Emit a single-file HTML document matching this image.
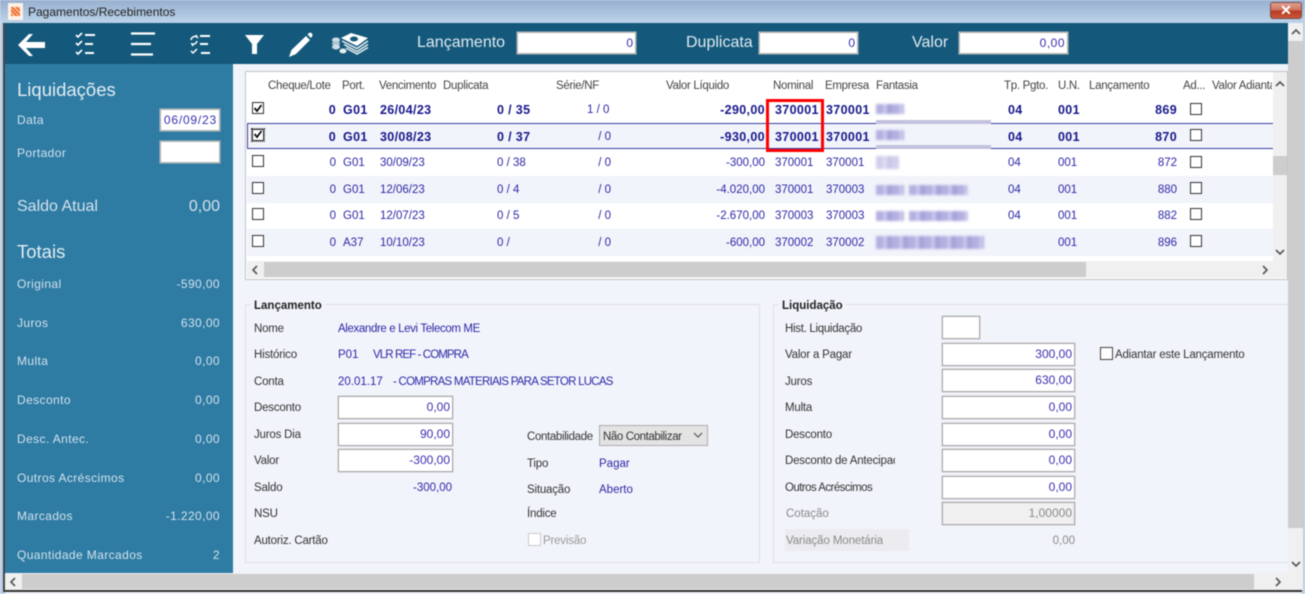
<!DOCTYPE html>
<html lang="pt"><head><meta charset="utf-8"><title>Pagamentos/Recebimentos</title>
<style>
html,body{margin:0;padding:0;width:1305px;height:594px;overflow:hidden;background:#f2f4fb}
#w{position:absolute;left:0;top:0;width:1305px;height:594px;overflow:hidden;filter:blur(.4px);font-family:"Liberation Sans",sans-serif;font-size:11.5px;color:#333}
#w div,#w svg{position:absolute}
.t{white-space:nowrap;line-height:14px;height:14px}
.h{color:#444;top:79px;letter-spacing:-.3px}
.b{color:#2d27a6;margin-top:1px}
.n{color:#17178c;font-weight:bold;margin-top:1px;font-size:12.5px;letter-spacing:.35px}
.s{color:#d3e3ee;font-size:12px;letter-spacing:.4px}
.sv{color:#d3e3ee;font-size:12px;letter-spacing:.4px;text-align:right;width:90px;left:130px}
.i{background:#fff;border:1px solid #aaa;box-shadow:0 0 0 .5px #ccc;box-sizing:border-box;color:#3a2fb0;text-align:right;padding-right:2px;line-height:21px;font-size:12px;height:22px}
.c{width:12px;height:12px;border:1px solid #333;background:#fff;box-sizing:border-box}
.m{filter:blur(1.2px);height:10px;background:repeating-linear-gradient(90deg,#b3b0e0 0 7px,#c8c6ea 7px 11px,#a6a3da 11px 16px)}
.sb{background:#cdcdcd}
.l{color:#333;margin-top:1px;letter-spacing:-.2px}
.g{color:#8a8a8a;margin-top:1px}
</style></head><body><div id="w">

<div style="left:0;top:0;width:1305px;height:23px;background:linear-gradient(#97b0ce,#bcd3ea)"></div>
<div style="left:0;top:23px;width:5px;height:571px;background:#b9cfe6"></div>
<div style="left:3px;top:23px;width:2px;height:568px;background:#444"></div>
<div style="left:3px;top:590px;width:1299px;height:2px;background:#333"></div>
<div style="left:1302px;top:23px;width:3px;height:571px;background:#b9cfe6"></div>
<div style="left:8px;top:3px;width:15px;height:17px;background:#fdf1e8"></div>
<div style="left:11px;top:7px;width:9px;height:9px;background:repeating-linear-gradient(45deg,#f0702a 0 2px,#fde0c8 2px 3px)"></div>
<div class="t" style="left:28px;top:5px;color:#222;font-size:12px">Pagamentos/Recebimentos</div>
<div style="left:1270px;top:2px;width:32px;height:17px;border:1px solid #7d4a4a;box-sizing:border-box;border-radius:3px;background:linear-gradient(#e0a090 0,#d07560 45%,#b83a20 55%,#c9583c)"></div>
<div class="t" style="left:1270px;top:3px;width:32px;text-align:center;color:#fff;font-weight:bold;font-size:14px">✕</div>

<!-- toolbar -->
<div style="left:5px;top:23px;width:1283px;height:41px;background:#14597b"></div>
<svg style="left:17px;top:32px" width="30" height="26" viewBox="0 0 30 26"><path d="M1 13 L12 2 L16 2 L9 10 L28 10 L28 16 L9 16 L16 24 L12 24 Z" fill="#fff"/></svg>
<svg style="left:72px;top:31px" width="26" height="26" viewBox="0 0 26 26" stroke="#fff" fill="none" stroke-width="1.6"><path d="M4 4l2 2 4-4M4 12l2 2 4-4M4 21l2 2 4-4"/><path stroke-width="2" d="M13 4h10M13 13h8M13 22h9"/></svg>
<svg style="left:128px;top:31px" width="28" height="26" viewBox="0 0 28 26" stroke="#fff" stroke-width="2.2" fill="none"><path d="M3 2.5h24M3 13h20M3 23.5h22"/></svg>
<svg style="left:188px;top:33px" width="26" height="24" viewBox="0 0 26 24" stroke="#fff" fill="none" stroke-width="1.5"><path d="M3 7a4 4 0 0 1 6-3l-1-2M9 8a4 4 0 0 1-5 3l1 2M3 18l2 2 4-4"/><path stroke-width="2" d="M12 3h10M12 11h8M13 20h9"/></svg>
<svg style="left:244px;top:34px" width="21" height="21" viewBox="0 0 21 21"><path d="M1 1H20L13 10V20H8V10Z" fill="#fff"/></svg>
<svg style="left:288px;top:31px" width="26" height="27" viewBox="0 0 26 27" fill="#fff"><path d="M1 26L3.500 19L18 5L22 9L8 23Z"/><path d="M19.500 3.500L21 2Q22.500 1 24 2.500Q25 4 24 5.500L23 7Z"/></svg>
<svg style="left:331px;top:32px" width="38" height="24" viewBox="0 0 38 24"><path d="M10 6L20 1 37 6 26 14Z" fill="#fff"/><ellipse cx="23" cy="7" rx="4" ry="2.500" fill="#14597b"/><path d="M11 9L26 16.500 37 9M13 12.500L26 19.500 37 12.500M15 16L26 22 37 15.500" fill="none" stroke="#eaf0f4" stroke-width="1.500"/><ellipse cx="5" cy="8" rx="4" ry="2.500" fill="#cfdde6"/><ellipse cx="5" cy="11.500" rx="4" ry="2.500" fill="#aec3d0"/><ellipse cx="5" cy="15" rx="4" ry="2.500" fill="#cfdde6"/><ellipse cx="12" cy="19" rx="3.500" ry="2.500" fill="#e5edf2"/></svg>
<div class="t" style="left:417px;top:34px;color:#dfe9f0;font-size:16px;line-height:18px;height:18px">Lançamento</div>
<div class="i" style="left:517px;top:32px;width:119px">0</div>
<div class="t" style="left:686px;top:34px;color:#dfe9f0;font-size:16px;line-height:18px;height:18px">Duplicata</div>
<div class="i" style="left:759px;top:32px;width:99px">0</div>
<div class="t" style="left:912px;top:34px;color:#dfe9f0;font-size:16px;line-height:18px;height:18px">Valor</div>
<div class="i" style="left:959px;top:32px;width:109px;letter-spacing:.5px">0,00</div>

<!-- outer v scrollbar -->
<div style="left:1288px;top:23px;width:15px;height:567px;background:#f0f0f0"></div>
<div class="sb" style="left:1288px;top:41px;width:15px;height:487px"></div>
<svg style="left:1291px;top:28px" width="10" height="8" viewBox="0 0 10 8" fill="none" stroke="#555" stroke-width="1.6"><path d="M1 6l4-4 4 4"/></svg>
<svg style="left:1291px;top:560px" width="10" height="8" viewBox="0 0 10 8" fill="none" stroke="#555" stroke-width="1.6"><path d="M1 2l4 4 4-4"/></svg>

<!-- sidebar -->
<div style="left:5px;top:64px;width:228px;height:509px;background:#2e7ba3"></div>
<div class="t" style="left:17px;top:79px;color:#e3edf3;font-size:18.500px;line-height:21px;height:21px">Liquidações</div>
<div class="t s" style="left:17px;top:113px">Data</div>
<div class="i" style="left:160px;top:109px;width:60px;padding-right:2px;letter-spacing:.8px">06/09/23</div>
<div class="t s" style="left:17px;top:146px">Portador</div>
<div class="i" style="left:160px;top:141px;width:60px"></div>
<div class="t" style="left:17px;top:197px;color:#d3e3ee;font-size:16px;line-height:19px;height:19px">Saldo Atual</div>
<div class="t" style="left:130px;width:90px;text-align:right;top:197px;color:#d3e3ee;font-size:16px;line-height:19px;height:19px">0,00</div>
<div class="t" style="left:17px;top:241px;color:#e3edf3;font-size:18.500px;line-height:21px;height:21px">Totais</div>
<div class="t s" style="left:17px;top:277px">Original</div><div class="t sv" style="top:277px">-590,00</div>
<div class="t s" style="left:17px;top:316px">Juros</div><div class="t sv" style="top:316px">630,00</div>
<div class="t s" style="left:17px;top:354px">Multa</div><div class="t sv" style="top:354px">0,00</div>
<div class="t s" style="left:17px;top:393px">Desconto</div><div class="t sv" style="top:393px">0,00</div>
<div class="t s" style="left:17px;top:432px">Desc. Antec.</div><div class="t sv" style="top:432px">0,00</div>
<div class="t s" style="left:17px;top:471px">Outros Acréscimos</div><div class="t sv" style="top:471px">0,00</div>
<div class="t s" style="left:17px;top:509px">Marcados</div><div class="t sv" style="top:509px">-1.220,00</div>
<div class="t s" style="left:17px;top:548px">Quantidade Marcados</div><div class="t sv" style="top:548px">2</div>

<!-- grid -->
<div style="left:245px;top:71px;width:1043px;height:209px;background:#fff;border:1px solid #c4c4c4;box-sizing:border-box"></div>
<div style="left:247px;top:176px;width:1026px;height:27px;background:#f2f4fb"></div>
<div style="left:247px;top:229px;width:1026px;height:27px;background:#f2f4fb"></div>
<div style="left:247px;top:123px;width:1026px;height:26px;background:#f2f4fb;border:1px solid #3c3ca0;border-right:0;box-sizing:border-box"></div>

<div class="t h" style="left:268px">Cheque/Lote</div>
<div class="t h" style="left:342px">Port.</div>
<div class="t h" style="left:379px">Vencimento</div>
<div class="t h" style="left:443px">Duplicata</div>
<div class="t h" style="left:556px">Série/NF</div>
<div class="t h" style="left:666px">Valor Líquido</div>
<div class="t h" style="left:773px">Nominal</div>
<div class="t h" style="left:825px">Empresa</div>
<div class="t h" style="left:876px">Fantasia</div>
<div class="t h" style="left:1004px">Tp. Pgto.</div>
<div class="t h" style="left:1058px">U.N.</div>
<div class="t h" style="left:1089px">Lançamento</div>
<div class="t h" style="left:1183px">Ad...</div>
<div class="t h" style="left:1212px;width:60px;overflow:hidden">Valor Adiantado</div>

<!-- row 1 -->
<div class="c" style="left:252px;top:102px"></div><svg style="left:253px;top:103px" width="10" height="10" viewBox="0 0 10 10" fill="none" stroke="#111" stroke-width="1.8"><path d="M1.500 5l2.500 3 4.500-6"/></svg>
<div class="t n" style="left:286px;width:50px;text-align:right;top:102px">0</div>
<div class="t n" style="left:343px;top:102px">G01</div>
<div class="t n" style="left:380px;top:102px">26/04/23</div>
<div class="t n" style="left:497px;top:102px">0 / 35</div>
<div class="t b" style="left:587px;top:102px">1 / 0</div>
<div class="t n" style="left:680px;width:85px;text-align:right;top:102px">-290,00</div>
<div class="t n" style="left:775px;top:102px">370001</div>
<div class="t n" style="left:826px;top:102px">370001</div>
<div class="m" style="left:876px;top:104px;width:28px"></div>
<div style="left:876px;top:120px;width:115px;height:4px;background:#c3c1e0"></div>
<div class="t n" style="left:1008px;top:102px">04</div>
<div class="t n" style="left:1058px;top:102px">001</div>
<div class="t n" style="left:1127px;width:50px;text-align:right;top:102px">869</div>
<div class="c" style="left:1190px;top:103px"></div>

<!-- row 2 -->
<div class="c" style="left:252px;top:129px;outline:1px dotted #333"></div><svg style="left:253px;top:129px" width="10" height="10" viewBox="0 0 10 10" fill="none" stroke="#111" stroke-width="1.8"><path d="M1.500 5l2.500 3 4.500-6"/></svg>
<div class="t n" style="left:286px;width:50px;text-align:right;top:129px">0</div>
<div class="t n" style="left:343px;top:129px">G01</div>
<div class="t n" style="left:380px;top:129px">30/08/23</div>
<div class="t n" style="left:497px;top:129px">0 / 37</div>
<div class="t b" style="left:590px;width:21px;text-align:right;top:129px">/ 0</div>
<div class="t n" style="left:680px;width:85px;text-align:right;top:129px">-930,00</div>
<div class="t n" style="left:775px;top:129px">370001</div>
<div class="t n" style="left:826px;top:129px">370001</div>
<div class="m" style="left:876px;top:130px;width:28px"></div>
<div style="left:876px;top:145px;width:115px;height:4px;background:#c3c1e0"></div>
<div class="t n" style="left:1008px;top:129px">04</div>
<div class="t n" style="left:1058px;top:129px">001</div>
<div class="t n" style="left:1127px;width:50px;text-align:right;top:129px">870</div>
<div class="c" style="left:1190px;top:129px"></div>

<!-- row 3 -->
<div class="c" style="left:252px;top:155px"></div>
<div class="t b" style="left:286px;width:50px;text-align:right;top:155px">0</div>
<div class="t b" style="left:343px;top:155px">G01</div>
<div class="t b" style="left:380px;top:155px">30/09/23</div>
<div class="t b" style="left:497px;top:155px">0 / 38</div>
<div class="t b" style="left:590px;width:21px;text-align:right;top:155px">/ 0</div>
<div class="t b" style="left:680px;width:85px;text-align:right;top:155px">-300,00</div>
<div class="t b" style="left:775px;top:155px">370001</div>
<div class="t b" style="left:826px;top:155px">370001</div>
<div class="m" style="left:876px;top:156px;width:23px;height:13px;opacity:.6"></div>
<div class="t b" style="left:1008px;top:155px">04</div>
<div class="t b" style="left:1058px;top:155px">001</div>
<div class="t b" style="left:1127px;width:50px;text-align:right;top:155px">872</div>
<div class="c" style="left:1190px;top:156px"></div>

<!-- row 4 -->
<div class="c" style="left:252px;top:182px"></div>
<div class="t b" style="left:286px;width:50px;text-align:right;top:182px">0</div>
<div class="t b" style="left:343px;top:182px">G01</div>
<div class="t b" style="left:380px;top:182px">12/06/23</div>
<div class="t b" style="left:497px;top:182px">0 / 4</div>
<div class="t b" style="left:590px;width:21px;text-align:right;top:182px">/ 0</div>
<div class="t b" style="left:680px;width:85px;text-align:right;top:182px">-4.020,00</div>
<div class="t b" style="left:775px;top:182px">370001</div>
<div class="t b" style="left:826px;top:182px">370003</div>
<div class="m" style="left:876px;top:185px;width:28px"></div><div class="m" style="left:909px;top:185px;width:59px"></div>
<div class="t b" style="left:1008px;top:182px">04</div>
<div class="t b" style="left:1058px;top:182px">001</div>
<div class="t b" style="left:1127px;width:50px;text-align:right;top:182px">880</div>
<div class="c" style="left:1190px;top:182px"></div>

<!-- row 5 -->
<div class="c" style="left:252px;top:208px"></div>
<div class="t b" style="left:286px;width:50px;text-align:right;top:208px">0</div>
<div class="t b" style="left:343px;top:208px">G01</div>
<div class="t b" style="left:380px;top:208px">12/07/23</div>
<div class="t b" style="left:497px;top:208px">0 / 5</div>
<div class="t b" style="left:590px;width:21px;text-align:right;top:208px">/ 0</div>
<div class="t b" style="left:680px;width:85px;text-align:right;top:208px">-2.670,00</div>
<div class="t b" style="left:775px;top:208px">370003</div>
<div class="t b" style="left:826px;top:208px">370003</div>
<div class="m" style="left:876px;top:211px;width:28px"></div><div class="m" style="left:909px;top:211px;width:59px"></div>
<div class="t b" style="left:1008px;top:208px">04</div>
<div class="t b" style="left:1058px;top:208px">001</div>
<div class="t b" style="left:1127px;width:50px;text-align:right;top:208px">882</div>
<div class="c" style="left:1190px;top:208px"></div>

<!-- row 6 -->
<div class="c" style="left:252px;top:235px"></div>
<div class="t b" style="left:286px;width:50px;text-align:right;top:235px">0</div>
<div class="t b" style="left:343px;top:235px">A37</div>
<div class="t b" style="left:380px;top:235px">10/10/23</div>
<div class="t b" style="left:497px;top:235px">0 /</div>
<div class="t b" style="left:590px;width:21px;text-align:right;top:235px">/ 0</div>
<div class="t b" style="left:680px;width:85px;text-align:right;top:235px">-600,00</div>
<div class="t b" style="left:775px;top:235px">370002</div>
<div class="t b" style="left:826px;top:235px">370002</div>
<div class="m" style="left:876px;top:236px;width:108px;height:13px"></div>
<div class="t b" style="left:1058px;top:235px">001</div>
<div class="t b" style="left:1127px;width:50px;text-align:right;top:235px">896</div>
<div class="c" style="left:1190px;top:235px"></div>

<!-- red highlight -->
<div style="left:766px;top:99px;width:58px;height:53px;border:3px solid #f00;box-sizing:border-box"></div>

<!-- grid scrollbars -->
<div style="left:247px;top:261px;width:1040px;height:17px;background:#f0f0f0"></div>
<div class="sb" style="left:264px;top:262px;width:822px;height:15px"></div>
<svg style="left:251px;top:265px" width="8" height="10" viewBox="0 0 8 10" fill="none" stroke="#555" stroke-width="1.6"><path d="M6 1L2 5l4 4"/></svg>
<svg style="left:1261px;top:265px" width="8" height="10" viewBox="0 0 8 10" fill="none" stroke="#555" stroke-width="1.6"><path d="M2 1l4 4-4 4"/></svg>
<div style="left:1273px;top:72px;width:14px;height:189px;background:#f0f0f0"></div>
<div class="sb" style="left:1273px;top:156px;width:14px;height:19px"></div>
<svg style="left:1275px;top:80px" width="10" height="8" viewBox="0 0 10 8" fill="none" stroke="#555" stroke-width="1.6"><path d="M1 6l4-4 4 4"/></svg>
<svg style="left:1275px;top:248px" width="10" height="8" viewBox="0 0 10 8" fill="none" stroke="#555" stroke-width="1.6"><path d="M1 2l4 4 4-4"/></svg>

<!-- Lançamento group -->
<div style="left:245px;top:304px;width:515px;height:259px;border:1px solid #dfe1e8;box-sizing:border-box"></div>
<div class="t" style="left:251px;top:298px;padding:0 3px;background:#f2f4fb;color:#222;font-weight:bold;margin-top:1px">Lançamento</div>
<div class="t l" style="left:254px;top:321px">Nome</div>
<div class="t b" style="left:338px;top:321px;letter-spacing:-.37px">Alexandre e Levi Telecom ME</div>
<div class="t l" style="left:254px;top:347px">Histórico</div>
<div class="t b" style="left:338px;top:347px">P01</div>
<div class="t b" style="left:373px;top:347px;letter-spacing:-.9px">VLR REF - COMPRA</div>
<div class="t l" style="left:254px;top:374px">Conta</div>
<div class="t b" style="left:338px;top:374px">20.01.17</div>
<div class="t b" style="left:393px;top:374px;letter-spacing:-.75px">- COMPRAS MATERIAIS PARA SETOR LUCAS</div>
<div class="t l" style="left:254px;top:400px">Desconto</div>
<div class="i" style="left:338px;top:396px;width:115px;height:23px">0,00</div>
<div class="t l" style="left:254px;top:427px">Juros Dia</div>
<div class="i" style="left:338px;top:423px;width:115px;height:23px">90,00</div>
<div class="t l" style="left:254px;top:453px">Valor</div>
<div class="i" style="left:338px;top:449px;width:115px;height:23px">-300,00</div>
<div class="t l" style="left:254px;top:480px">Saldo</div>
<div class="t b" style="left:372px;width:80px;text-align:right;top:480px">-300,00</div>
<div class="t l" style="left:254px;top:506px">NSU</div>
<div class="t l" style="left:254px;top:533px">Autoriz. Cartão</div>
<div class="t l" style="left:527px;top:429px;letter-spacing:-.35px">Contabilidade</div>
<div style="left:599px;top:425px;width:109px;height:21px;background:#e3e3e3;border:1px solid #adadad;box-sizing:border-box"></div>
<div class="t" style="left:603px;top:429px;color:#333;margin-top:1px;letter-spacing:-.4px">Não Contabilizar</div>
<svg style="left:693px;top:432px" width="10" height="7" viewBox="0 0 10 7" fill="none" stroke="#555" stroke-width="1.2"><path d="M1 1l4 4 4-4"/></svg>
<div class="t l" style="left:527px;top:456px">Tipo</div>
<div class="t b" style="left:599px;top:456px">Pagar</div>
<div class="t l" style="left:527px;top:482px">Situação</div>
<div class="t b" style="left:599px;top:482px">Aberto</div>
<div class="t l" style="left:527px;top:506px">Índice</div>
<div style="left:528px;top:533px;width:13px;height:13px;background:#fff;border:1px solid #ccc;box-sizing:border-box"></div>
<div class="t g" style="left:543px;top:533px;color:#999;letter-spacing:-.2px">Previsão</div>

<!-- Liquidação group -->
<div style="left:773px;top:304px;width:515px;height:259px;border:1px solid #dfe1e8;border-right:0;box-sizing:border-box"></div>
<div class="t" style="left:779px;top:298px;padding:0 3px;background:#f2f4fb;color:#222;font-weight:bold;margin-top:1px">Liquidação</div>
<div class="t l" style="left:785px;top:321px;letter-spacing:-.3px">Hist. Liquidação</div>
<div class="i" style="left:942px;top:316px;width:38px;height:23px"></div>
<div class="t l" style="left:785px;top:347px;letter-spacing:-.2px">Valor a Pagar</div>
<div class="i" style="left:942px;top:343px;width:133px;height:23px">300,00</div>
<div class="t l" style="left:785px;top:374px">Juros</div>
<div class="i" style="left:942px;top:369px;width:133px;height:23px">630,00</div>
<div class="t l" style="left:785px;top:400px">Multa</div>
<div class="i" style="left:942px;top:396px;width:133px;height:23px">0,00</div>
<div class="t l" style="left:785px;top:427px">Desconto</div>
<div class="i" style="left:942px;top:423px;width:133px;height:23px">0,00</div>
<div class="t l" style="left:785px;top:453px;width:110px;overflow:hidden">Desconto de Antecipação</div>
<div class="i" style="left:942px;top:449px;width:133px;height:23px">0,00</div>
<div class="t l" style="left:785px;top:480px;letter-spacing:-.55px">Outros Acréscimos</div>
<div class="i" style="left:942px;top:476px;width:133px;height:23px">0,00</div>
<div class="t g" style="left:786px;top:506px">Cotação</div>
<div class="i" style="left:942px;top:502px;width:133px;height:23px;background:#f0f0f0;color:#8a8a8a">1,00000</div>
<div style="left:785px;top:529px;width:124px;height:22px;background:#ececf0"></div>
<div class="t g" style="left:786px;top:533px;letter-spacing:-.1px">Variação Monetária</div>
<div class="t g" style="left:1000px;width:75px;text-align:right;top:533px">0,00</div>
<div style="left:1100px;top:347px;width:13px;height:13px;background:#fff;border:1px solid #444;box-sizing:border-box"></div>
<div class="t l" style="left:1115px;top:347px">Adiantar este Lançamento</div>

<!-- bottom scrollbar -->
<div style="left:5px;top:573px;width:1298px;height:17px;background:#f0f0f0"></div>
<div class="sb" style="left:22px;top:574px;width:1232px;height:15px"></div>
<svg style="left:9px;top:577px" width="8" height="10" viewBox="0 0 8 10" fill="none" stroke="#555" stroke-width="1.6"><path d="M6 1L2 5l4 4"/></svg>
<svg style="left:1274px;top:577px" width="8" height="10" viewBox="0 0 8 10" fill="none" stroke="#555" stroke-width="1.6"><path d="M2 1l4 4-4 4"/></svg>
</div></body></html>
